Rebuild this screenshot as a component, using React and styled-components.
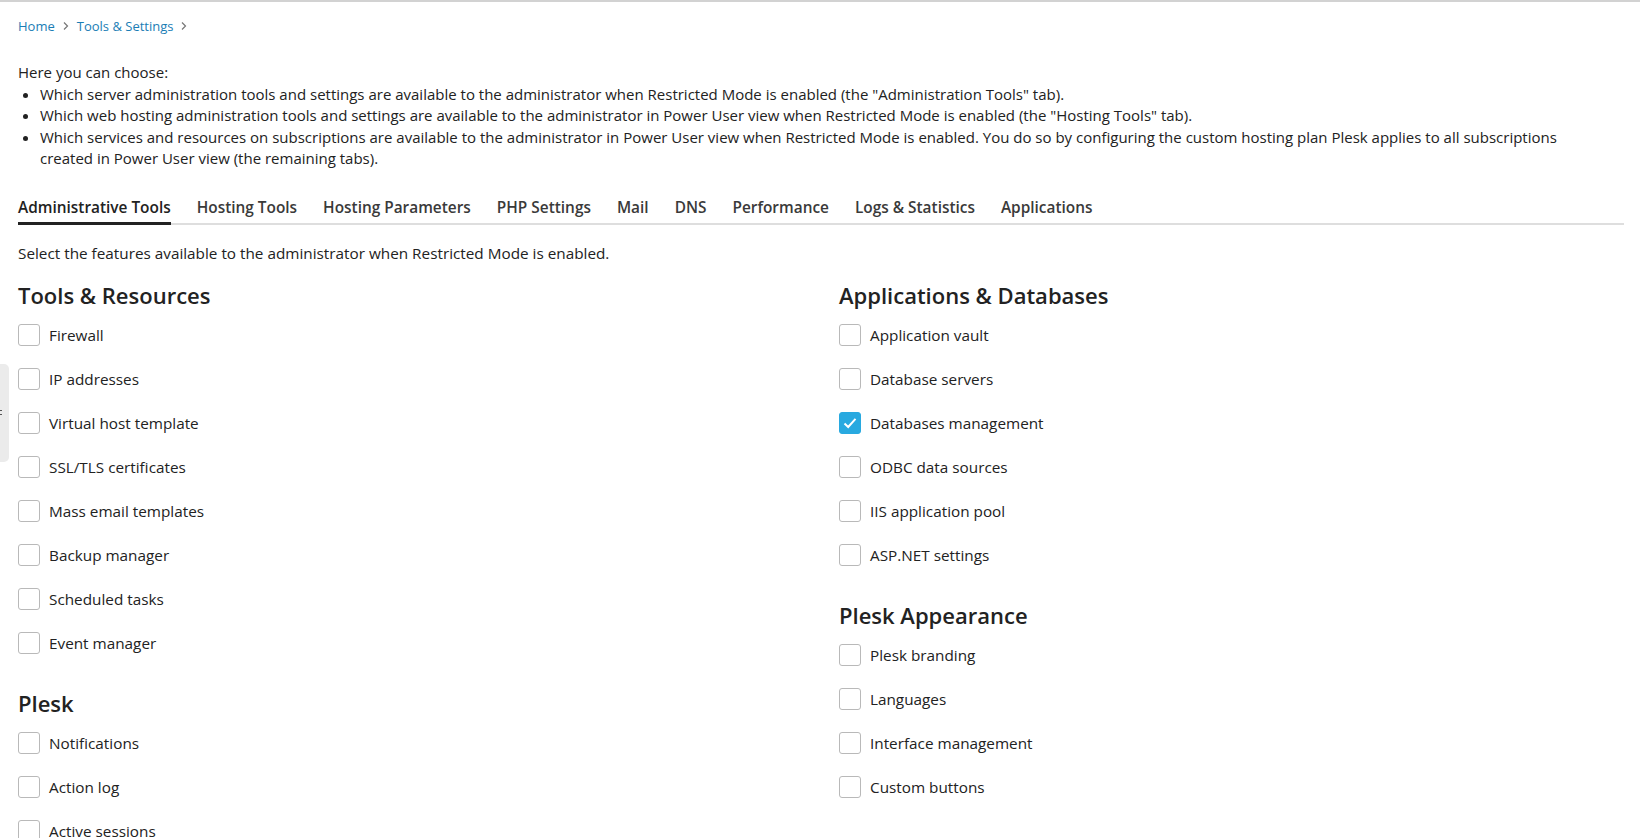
import React from "react"
import styled, { createGlobalStyle } from "styled-components"

const GlobalStyle = createGlobalStyle`
  body {
    margin: 0;
    background: #fff;
    font-family: "Open Sans", "Liberation Sans", sans-serif;
    color: #222;
  }
`

const tabs = [
  "Administrative Tools",
  "Hosting Tools",
  "Hosting Parameters",
  "PHP Settings",
  "Mail",
  "DNS",
  "Performance",
  "Logs & Statistics",
  "Applications",
]

const leftSections = [
  {
    title: "Tools & Resources",
    items: [
      "Firewall",
      "IP addresses",
      "Virtual host template",
      "SSL/TLS certificates",
      "Mass email templates",
      "Backup manager",
      "Scheduled tasks",
      "Event manager",
    ],
  },
  {
    title: "Plesk",
    items: ["Notifications", "Action log", "Active sessions"],
  },
]

const rightSections = [
  {
    title: "Applications & Databases",
    items: [
      "Application vault",
      "Database servers",
      "Databases management",
      "ODBC data sources",
      "IIS application pool",
      "ASP.NET settings",
    ],
  },
  {
    title: "Plesk Appearance",
    items: [
      "Plesk branding",
      "Languages",
      "Interface management",
      "Custom buttons",
    ],
  },
]

const checkedItems = ["Databases management"]

const Chevron = () => (
  <svg width="8" height="10" viewBox="0 0 8 10">
    <path d="M2 1.5 L5.5 5 L2 8.5" fill="none" stroke="#777" strokeWidth="1.2" />
  </svg>
)

const Check = () => (
  <svg width="14" height="12" viewBox="0 0 14 12">
    <path d="M1.5 6.5 L5.2 10 L12.5 1.8" fill="none" stroke="#fff" strokeWidth="2" />
  </svg>
)

const Section = ({ title, items }) => (
  <SectionBlock>
    <SectionTitle>{title}</SectionTitle>
    {items.map((item) => {
      const checked = checkedItems.includes(item)
      return (
        <Row key={item}>
          <Box data-checked={checked ? "true" : "false"}>{checked && <Check />}</Box>
          <RowLabel>{item}</RowLabel>
        </Row>
      )
    })}
  </SectionBlock>
)

const App = () => {
  return (
    <Page>
      <GlobalStyle />
      <SideHandle>
        <HandleMark />
      </SideHandle>
      <Breadcrumbs>
        <Crumb href="#">Home</Crumb>
        <Chevron />
        <Crumb href="#">Tools &amp; Settings</Crumb>
        <Chevron />
      </Breadcrumbs>
      <Intro>
        <p>Here you can choose:</p>
        <ul>
          <li>
            Which server administration tools and settings are available to the administrator
            when Restricted Mode is enabled (the "Administration Tools" tab).
          </li>
          <li>
            Which web hosting administration tools and settings are available to the administrator
            in Power User view when Restricted Mode is enabled (the "Hosting Tools" tab).
          </li>
          <li>
            Which services and resources on subscriptions are available to the administrator in
            Power User view when Restricted Mode is enabled. You do so by configuring the custom
            hosting plan Plesk applies to all subscriptions created in Power User view (the
            remaining tabs).
          </li>
        </ul>
      </Intro>
      <TabBar>
        {tabs.map((t, i) => (
          <Tab key={t} data-active={i === 0 ? "true" : "false"}>
            {t}
          </Tab>
        ))}
      </TabBar>
      <Hint>Select the features available to the administrator when Restricted Mode is enabled.</Hint>
      <Columns>
        <Column>
          {leftSections.map((s) => (
            <Section key={s.title} {...s} />
          ))}
        </Column>
        <Column>
          {rightSections.map((s) => (
            <Section key={s.title} {...s} />
          ))}
        </Column>
      </Columns>
    </Page>
  )
}

export default App

const Page = styled.div`
  position: relative;
  min-height: 838px;
  padding: 0 16px 0 18px;
  border-top: 2px solid #d2d2d2;
  box-sizing: border-box;
  overflow: hidden;
`
const SideHandle = styled.div`
  position: absolute;
  left: 0;
  top: 362px;
  width: 9px;
  height: 98px;
  background: #ebebeb;
  border-radius: 0 5px 5px 0;
`
const HandleMark = styled.div`
  position: absolute;
  left: 0;
  top: 46px;
  width: 2px;
  height: 5px;
  border-top: 1px solid #555;
  border-bottom: 1px solid #555;
  box-sizing: border-box;
`
const Breadcrumbs = styled.nav`
  display: flex;
  align-items: center;
  gap: 7px;
  margin-top: 14px;
  height: 20px;
  font-size: 13px;
`
const Crumb = styled.a`
  color: #1a7db5;
  text-decoration: none;
  line-height: 20px;
`
const Intro = styled.div`
  max-width: 1545px;
  margin-top: 26px;
  font-size: 15px;
  line-height: 21.5px;
  color: #222;
  p {
    margin: 0;
  }
  ul {
    margin: 0;
    padding-left: 22px;
  }
`
const TabBar = styled.div`
  display: flex;
  gap: 26px;
  margin-top: 27px;
  box-shadow: inset 0 -2px 0 #dedede;
`
const Tab = styled.div`
  font-size: 15.4px;
  font-weight: 600;
  line-height: 20px;
  color: #3a3a3a;
  padding: 1px 0 4px;
  border-bottom: 3px solid transparent;
  &[data-active="true"] {
    color: #222;
    border-bottom-color: #222;
  }
`
const Hint = styled.div`
  margin-top: 18px;
  font-size: 15.3px;
  line-height: 20px;
`
const Columns = styled.div`
  display: grid;
  grid-template-columns: 1fr 1fr;
  column-gap: 36px;
  margin-top: 18px;
`
const Column = styled.div`
  display: flex;
  flex-direction: column;
  gap: 24px;
`
const SectionBlock = styled.section``
const SectionTitle = styled.h2`
  margin: 0 0 4px;
  font-size: 22px;
  font-weight: 600;
  line-height: 28px;
  color: #222;
`
const Row = styled.label`
  display: flex;
  align-items: center;
  height: 44px;
  gap: 9px;
`
const Box = styled.span`
  width: 22px;
  height: 22px;
  box-sizing: border-box;
  border: 1px solid #b9b9b9;
  border-radius: 3px;
  background: #fff;
  display: flex;
  align-items: center;
  justify-content: center;
  &[data-checked="true"] {
    background: #28a9e0;
    border-color: #28a9e0;
  }
`
const RowLabel = styled.span`
  font-size: 15.3px;
  line-height: 20px;
  color: #222;
`
